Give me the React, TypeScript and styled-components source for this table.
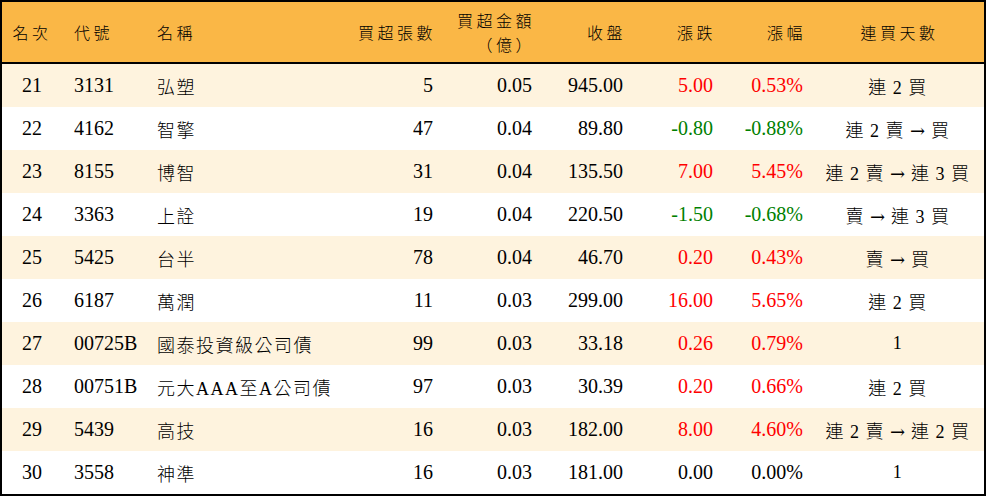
import styled, { createGlobalStyle } from "styled-components";

const GlobalStyle = createGlobalStyle`
  html, body {
    margin: 0;
    padding: 0;
    background: #ffffff;
  }
  body {
    font-family: "Liberation Serif", "Noto Sans CJK TC", serif;
    color: #000;
  }
`;

const columns = "60px 83px 195px 105px 99px 91px 90px 90px 169px";

const Board = styled.div`
  width: 986px;
  height: 496px;
  box-sizing: border-box;
  border: 2px solid #000;
  display: flex;
  flex-direction: column;
`;

const HeaderRow = styled.div`
  display: grid;
  grid-template-columns: ${columns};
  height: 60px;
  background: #fab746;
  border-bottom: 2px solid #000;
`;

const Row = styled.div<{ $alt: boolean }>`
  display: grid;
  grid-template-columns: ${columns};
  height: 43px;
  background: ${(p) => (p.$alt ? "#fef3de" : "#ffffff")};
`;

type Align = "left" | "right" | "center";

const justify = (a: Align) =>
  a === "left" ? "flex-start" : a === "right" ? "flex-end" : "center";

const HeadCell = styled.div<{ $align: Align }>`
  display: flex;
  flex-direction: column;
  justify-content: center;
  align-items: ${(p) => justify(p.$align)};
  text-align: ${(p) => p.$align};
  padding: 0 ${(p) => (p.$align === "right" ? "9px" : "0")} 0
    ${(p) => (p.$align === "left" ? "12px" : "0")};
  font-family: "Noto Sans CJK TC", "Liberation Serif", sans-serif;
  font-weight: 300;
  font-size: 16px;
  letter-spacing: 3.5px;
  line-height: 24px;
`;

const Cell = styled.div<{ $align: Align; $tone?: "up" | "down" | "flat" }>`
  display: flex;
  align-items: center;
  justify-content: ${(p) => justify(p.$align)};
  padding: 0 ${(p) => (p.$align === "right" ? "12px" : "0")} 0
    ${(p) => (p.$align === "left" ? "12px" : "0")};
  font-size: 20px;
  white-space: nowrap;
  color: ${(p) =>
    p.$tone === "up" ? "#ff0000" : p.$tone === "down" ? "#008000" : "#000"};
`;

const Han = styled.span`
  font-size: 18px;
  font-weight: 300;
  letter-spacing: 1.5px;
`;

const Days = styled.span`
  font-size: 18px;
  font-weight: 300;
  letter-spacing: 0.5px;
  word-spacing: 1px;
  margin-right: 4px;
`;

const Arrow = styled.span`
  font-family: "DejaVu Serif", "DejaVu Sans", serif;
  font-size: 18px;
  letter-spacing: 0;
`;

type Item = {
  rank: number;
  code: string;
  name: string;
  lots: number;
  amount: string;
  close: string;
  change: string;
  pct: string;
  days: string;
};

const rows: Item[] = [
  { rank: 21, code: "3131", name: "弘塑", lots: 5, amount: "0.05", close: "945.00", change: "5.00", pct: "0.53%", days: "連 2 買" },
  { rank: 22, code: "4162", name: "智擎", lots: 47, amount: "0.04", close: "89.80", change: "-0.80", pct: "-0.88%", days: "連 2 賣 → 買" },
  { rank: 23, code: "8155", name: "博智", lots: 31, amount: "0.04", close: "135.50", change: "7.00", pct: "5.45%", days: "連 2 賣 → 連 3 買" },
  { rank: 24, code: "3363", name: "上詮", lots: 19, amount: "0.04", close: "220.50", change: "-1.50", pct: "-0.68%", days: "賣 → 連 3 買" },
  { rank: 25, code: "5425", name: "台半", lots: 78, amount: "0.04", close: "46.70", change: "0.20", pct: "0.43%", days: "賣 → 買" },
  { rank: 26, code: "6187", name: "萬潤", lots: 11, amount: "0.03", close: "299.00", change: "16.00", pct: "5.65%", days: "連 2 買" },
  { rank: 27, code: "00725B", name: "國泰投資級公司債", lots: 99, amount: "0.03", close: "33.18", change: "0.26", pct: "0.79%", days: "1" },
  { rank: 28, code: "00751B", name: "元大AAA至A公司債", lots: 97, amount: "0.03", close: "30.39", change: "0.20", pct: "0.66%", days: "連 2 買" },
  { rank: 29, code: "5439", name: "高技", lots: 16, amount: "0.03", close: "182.00", change: "8.00", pct: "4.60%", days: "連 2 賣 → 連 2 買" },
  { rank: 30, code: "3558", name: "神準", lots: 16, amount: "0.03", close: "181.00", change: "0.00", pct: "0.00%", days: "1" },
];

const toneOf = (v: string) =>
  v.startsWith("-") ? "down" : parseFloat(v) === 0 ? "flat" : "up";

const renderDays = (days: string) =>
  days.split("→").map((part, i) => (
    <span key={i}>
      {i > 0 && <Arrow>→</Arrow>}
      {part}
    </span>
  ));

const App = () => {
  return (
    <>
      <GlobalStyle />
      <Board>
        <HeaderRow>
          <HeadCell $align="center">名次</HeadCell>
          <HeadCell $align="left">代號</HeadCell>
          <HeadCell $align="left">名稱</HeadCell>
          <HeadCell $align="right">買超張數</HeadCell>
          <HeadCell $align="right">
            <span>買超金額</span>
            <span>（億）</span>
          </HeadCell>
          <HeadCell $align="right">收盤</HeadCell>
          <HeadCell $align="right">漲跌</HeadCell>
          <HeadCell $align="right">漲幅</HeadCell>
          <HeadCell $align="center">連買天數</HeadCell>
        </HeaderRow>
        {rows.map((r, i) => {
          const tone = toneOf(r.change);
          return (
            <Row key={r.rank} $alt={i % 2 === 0}>
              <Cell $align="center">{r.rank}</Cell>
              <Cell $align="left">{r.code}</Cell>
              <Cell $align="left">
                <Han>{r.name}</Han>
              </Cell>
              <Cell $align="right">{r.lots}</Cell>
              <Cell $align="right">{r.amount}</Cell>
              <Cell $align="right">{r.close}</Cell>
              <Cell $align="right" $tone={tone}>
                {r.change}
              </Cell>
              <Cell $align="right" $tone={tone}>
                {r.pct}
              </Cell>
              <Cell $align="center">
                <Days>{renderDays(r.days)}</Days>
              </Cell>
            </Row>
          );
        })}
      </Board>
    </>
  );
};

export default App;
